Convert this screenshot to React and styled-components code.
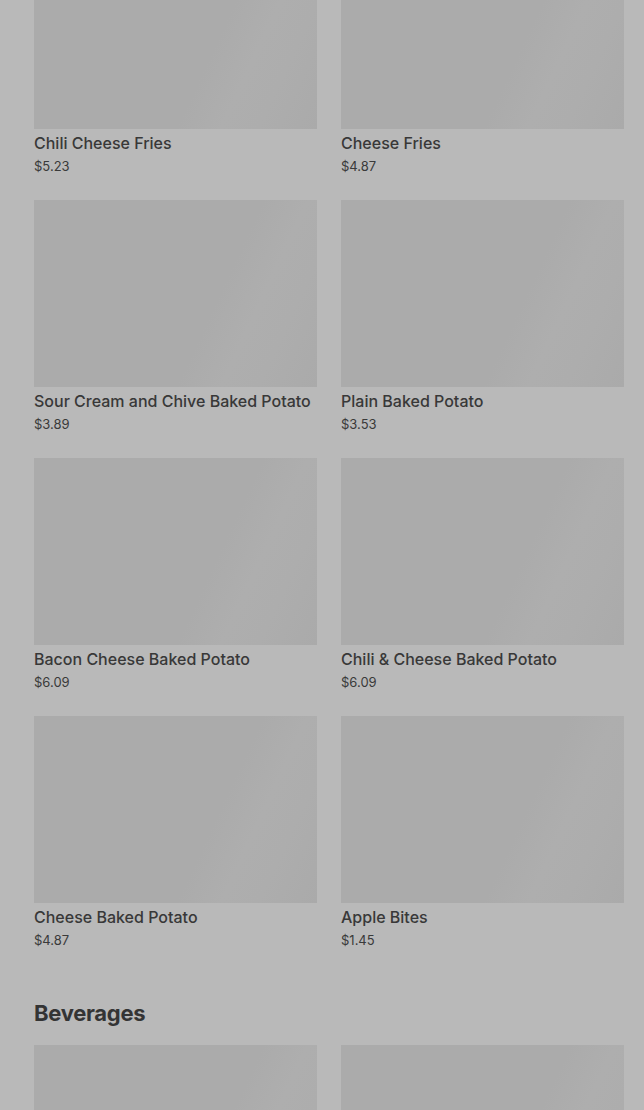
import React from 'react';
import styled, { createGlobalStyle } from 'styled-components';

const sides = [
  { name: 'Chili Cheese Fries', price: '$5.23' },
  { name: 'Cheese Fries', price: '$4.87' },
  { name: 'Sour Cream and Chive Baked Potato', price: '$3.89' },
  { name: 'Plain Baked Potato', price: '$3.53' },
  { name: 'Bacon Cheese Baked Potato', price: '$6.09' },
  { name: 'Chili & Cheese Baked Potato', price: '$6.09' },
  { name: 'Cheese Baked Potato', price: '$4.87' },
  { name: 'Apple Bites', price: '$1.45' },
];

const beverages = [
  { name: 'Coca-Cola', price: '$2.19' },
  { name: 'Sprite', price: '$2.19' },
];

function ItemCard({ item }) {
  return (
    <Card>
      <Thumb />
      <ItemName>{item.name}</ItemName>
      <ItemPrice>{item.price}</ItemPrice>
    </Card>
  );
}

function App() {
  return (
    <>
      <GlobalStyle />
      <Page>
        {/* page is scrolled: first row of images starts above the fold */}
        <Section $scrolled>
          <Grid>
            {sides.map((item) => (
              <ItemCard key={item.name} item={item} />
            ))}
          </Grid>
        </Section>
        <Section>
          <Heading>Beverages</Heading>
          <Grid>
            {beverages.map((item) => (
              <ItemCard key={item.name} item={item} />
            ))}
          </Grid>
        </Section>
      </Page>
    </>
  );
}

const GlobalStyle = createGlobalStyle`
  html, body {
    margin: 0;
    padding: 0;
    background: #b9b9b9;
  }
  body {
    font-family: Inter, Roboto, "Liberation Sans", sans-serif;
    color: #363636;
  }
`;

const Page = styled.div`
  height: 1110px;
  overflow: hidden;
  padding: 0 20px 0 34px;
  box-sizing: border-box;
`;

const Section = styled.section`
  margin-top: ${(p) => (p.$scrolled ? '-58px' : '0')};
  margin-bottom: 50px;
`;

const Heading = styled.h2`
  margin: 0 0 18px;
  font-family: Inter, "Noto Sans", sans-serif;
  font-size: 22px;
  line-height: 28px;
  font-weight: 700;
  letter-spacing: -0.3px;
  color: #343434;
`;

const Grid = styled.div`
  display: grid;
  grid-template-columns: 1fr 1fr;
  column-gap: 24px;
  row-gap: 25px;
`;

const Card = styled.div`
  display: flex;
  flex-direction: column;
`;

const Thumb = styled.div`
  height: 187px;
  background: linear-gradient(
    115deg,
    #ababab 0%,
    #ababab 62%,
    #aeaeae 74%,
    #adadad 84%,
    #aaaaaa 100%
  );
  margin-bottom: 4px;
`;

const ItemName = styled.div`
  font-size: 16px;
  line-height: 20px;
  font-weight: 500;
  color: #383838;
  white-space: nowrap;
`;

const ItemPrice = styled.div`
  margin-top: 4px;
  font-size: 13px;
  line-height: 18px;
  color: #3a3a3a;
`;

export default App;
